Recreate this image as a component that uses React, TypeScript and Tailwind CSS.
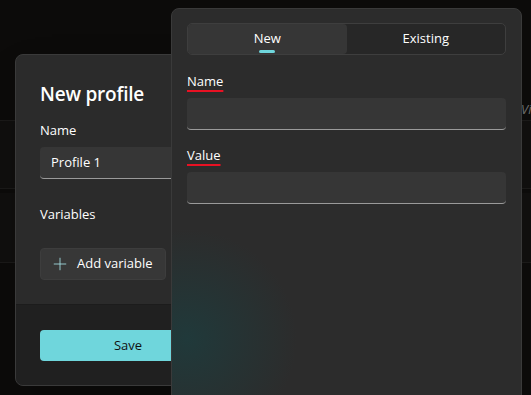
import { Plus } from "lucide-react";

export default function App() {
  return (
    <div className="relative w-[531px] h-[395px] overflow-hidden bg-[#0c0b0a] font-['Open_Sans',sans-serif] text-white">
      {/* Background app rows */}
      <div className="flex flex-col">
        <div className="h-[121px] border-b border-[#1b1a19]" />
        <div className="h-[68px] bg-[#100f0e] border-b border-[#1b1a19]" />
        <div className="h-[4px]" />
        <div className="h-[70px] bg-[#100f0e] border-b border-[#1b1a19]" />
      </div>
      <span className="absolute left-[521px] top-[100px] text-[13px] italic text-[#6b6b6b]">Vi</span>

      {/* Dialog */}
      <div className="absolute left-[15px] top-[54px] w-[410px] h-[332px] rounded-lg border border-[#3a3a3a] bg-[#2b2b2b] overflow-hidden flex flex-col shadow-2xl">
        <div className="px-6 pt-[26px] flex flex-col">
          <h1 className="text-[19px] font-semibold leading-[26px] tracking-[-0.2px]">New profile</h1>
          <label className="mt-[13px] text-[13px] leading-5">Name</label>
          <div className="mt-[7px] h-[32px] w-[300px] rounded-[4px] bg-[#363636] border-b border-[#9a9a9a] flex items-center pl-[11px] text-[13px]">
            Profile 1
          </div>
          <div className="mt-[25px] text-[13px] leading-5">Variables</div>
          <button className="mt-[24px] h-[32px] w-[126px] rounded-[4px] bg-[#373737] border border-[#3d3d3d] flex items-center pl-[9px] gap-[7px] text-[13px]">
            <Plus className="w-[20px] h-[20px] text-[#a6e3e8]" strokeWidth={1} />
            Add variable
          </button>
        </div>
        <div className="mt-auto h-[81px] bg-[#202020] border-t border-[#1c1c1c] px-6 pt-[25px] flex gap-2">
          <button className="h-[31px] w-[176px] rounded-[4px] bg-[#6fd6dc] text-[13px] text-[#111]">Save</button>
          <button className="h-[31px] w-[176px] rounded-[4px] bg-[#373737] text-[13px]">Cancel</button>
        </div>
      </div>

      {/* Flyout */}
      <div className="absolute left-[171px] top-[8px] w-[351px] h-[400px] rounded-t-lg border border-[#3a3a3a] bg-[#2c2c2c] bg-[radial-gradient(circle_at_15px_330px,rgba(24,66,68,0.6),rgba(44,44,44,0)_110px)] px-[15px] pt-[14px]">
        <div className="grid grid-cols-2 h-[32px] rounded-[5px] border border-[#3e3e3e] bg-[#272727] text-[13px]">
          <div className="relative flex items-center justify-center rounded-[4px] bg-[#363636]">
            New
            <span className="absolute bottom-[1px] left-1/2 -translate-x-1/2 w-[16px] h-[3px] rounded-full bg-[#6fd6dc]" />
          </div>
          <div className="flex items-center justify-center">Existing</div>
        </div>
        <div className="mt-[16px] text-[13px] leading-5 underline decoration-[#e81123] decoration-2 underline-offset-[4px]">Name</div>
        <div className="mt-[7px] h-[32px] rounded-[4px] bg-[#363636] border-b border-[#9a9a9a]" />
        <div className="mt-[15px] text-[13px] leading-5 underline decoration-[#e81123] decoration-2 underline-offset-[4px]">Value</div>
        <div className="mt-[7px] h-[32px] rounded-[4px] bg-[#363636] border-b border-[#9a9a9a]" />
      </div>
    </div>
  );
}
